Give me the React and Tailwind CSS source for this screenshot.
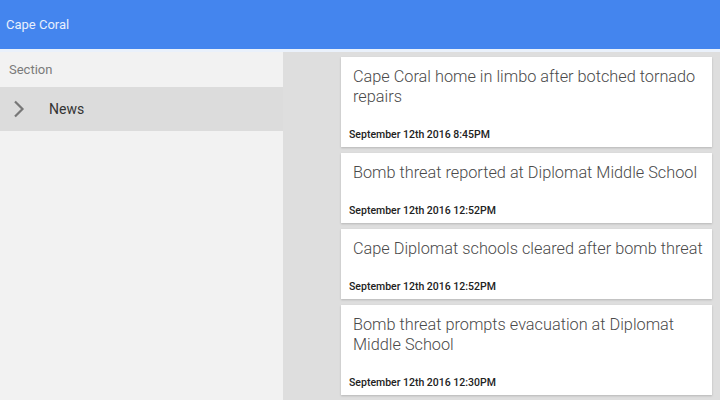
import React from "react";

const articles = [
  { title: "Cape Coral home in limbo after botched tornado repairs", date: "September 12th 2016 8:45PM" },
  { title: "Bomb threat reported at Diplomat Middle School", date: "September 12th 2016 12:52PM" },
  { title: "Cape Diplomat schools cleared after bomb threat", date: "September 12th 2016 12:52PM" },
  { title: "Bomb threat prompts evacuation at Diplomat Middle School", date: "September 12th 2016 12:30PM" },
];

function ArticleCard({ article }) {
  return (
    <div className="bg-white shadow-[0_1px_2px_rgba(0,0,0,0.18)] pt-[10px] pb-[6px]">
      <h3 className="pl-3 pr-[4px] text-[16.3px] leading-[20px] font-light text-[#4a4a4a]">{article.title}</h3>
      <p className="mt-[21px] pl-2 text-[10.5px] leading-[13px] font-medium text-[#222]">{article.date}</p>
    </div>
  );
}

export default function App() {
  return (
    <div className="w-[720px] h-[400px] overflow-hidden flex flex-col bg-[#dedede]" style={{ fontFamily: "Roboto, 'Liberation Sans', sans-serif" }}>
      {/* Toolbar */}
      <div className="h-[49px] shrink-0 bg-[#4485ee] flex items-center px-[6px]">
        <span className="text-[13px] text-[#e8f0fd]">Cape Coral</span>
      </div>
      <div className="h-[3px] shrink-0 bg-[#eaf1fb]" />

      <div className="flex flex-1 min-h-0">
        {/* Sidebar */}
        <div className="w-[283px] shrink-0 bg-[#f2f2f2]">
          <div className="h-[35px] flex items-center px-[9px] text-[13px] text-[#7a7a7a]">Section</div>
          <div className="h-[44px] bg-[#dcdcdc] flex items-center">
            <svg width="12" height="18" viewBox="0 0 12 18" className="ml-[13px]">
              <path d="M2 1.5 L9.5 9 L2 16.5" fill="none" stroke="#777" strokeWidth="2.2" />
            </svg>
            <span className="ml-[24px] text-[14px] text-[#333]">News</span>
          </div>
        </div>

        {/* Article list */}
        <div className="flex-1 pl-[58px] pr-[8px] pt-[5px] flex flex-col gap-[6px]">
          {articles.map((a, i) => (
            <ArticleCard key={i} article={a} />
          ))}
        </div>
      </div>
    </div>
  );
}
